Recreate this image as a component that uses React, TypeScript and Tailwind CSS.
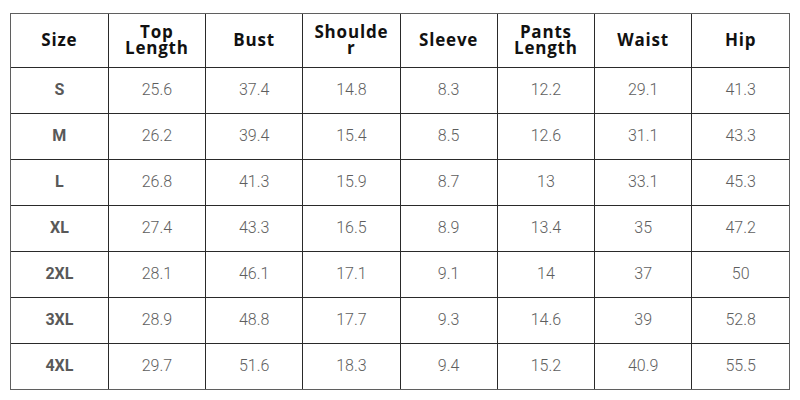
const headers: React.ReactNode[] = [
  'Size',
  <>Top<br />Length</>,
  'Bust',
  <>Shoulde<br />r</>,
  'Sleeve',
  <>Pants<br />Length</>,
  'Waist',
  'Hip',
];

const rows: string[][] = [
  ['S', '25.6', '37.4', '14.8', '8.3', '12.2', '29.1', '41.3'],
  ['M', '26.2', '39.4', '15.4', '8.5', '12.6', '31.1', '43.3'],
  ['L', '26.8', '41.3', '15.9', '8.7', '13', '33.1', '45.3'],
  ['XL', '27.4', '43.3', '16.5', '8.9', '13.4', '35', '47.2'],
  ['2XL', '28.1', '46.1', '17.1', '9.1', '14', '37', '50'],
  ['3XL', '28.9', '48.8', '17.7', '9.3', '14.6', '39', '52.8'],
  ['4XL', '29.7', '51.6', '18.3', '9.4', '15.2', '40.9', '55.5'],
];

export default function App() {
  return (
    <div className="w-[800px] h-[400px] bg-white pt-[13px] pl-[10px]">
      <div className="w-[780px] border-[1.5px] border-[#5f5f5f]">
        <table className="w-full table-fixed border-collapse">
          <thead>
            <tr className="h-[53px]">
              {headers.map((h, i) => (
                <th
                  key={i}
                  className="border-l border-b border-[#2a2a2a] first:border-l-0 text-center align-middle font-bold text-[17px] leading-[16px] tracking-[0.8px] text-[#111] font-['Open_Sans',sans-serif]"
                >
                  {h}
                </th>
              ))}
            </tr>
          </thead>
          <tbody>
            {rows.map((r, ri) => (
              <tr key={ri} className="h-[46px]">
                {r.map((c, ci) => (
                  <td
                    key={ci}
                    className={`border-l border-t border-[#2a2a2a] first:border-l-0 text-center align-middle text-[16px] font-['Roboto',sans-serif] ${
                      ci === 0 ? 'font-bold text-[#595959]' : 'font-light text-[#5e5e5e]'
                    } ${ri === 0 ? 'border-t-0' : ''}`}
                  >
                    {c}
                  </td>
                ))}
              </tr>
            ))}
          </tbody>
        </table>
      </div>
    </div>
  );
}
